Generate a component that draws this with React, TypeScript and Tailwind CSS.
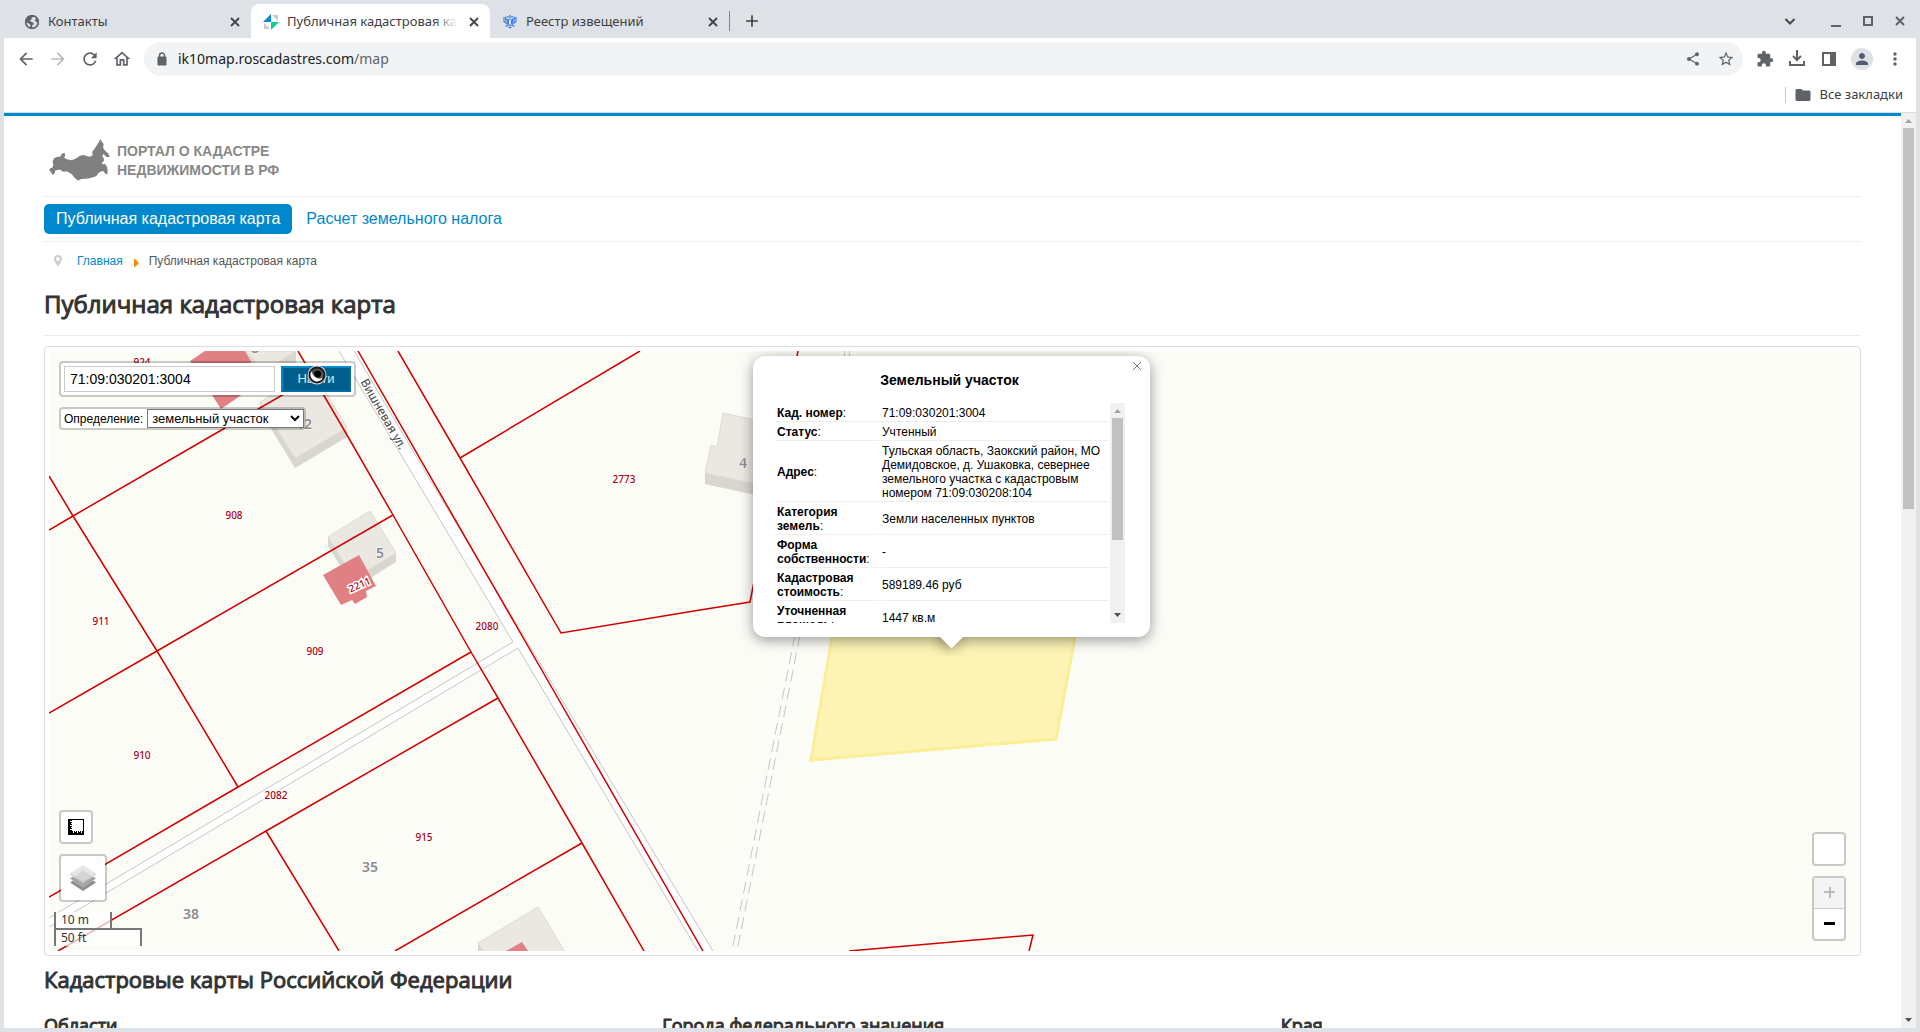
import React from 'react';
import {
    MdArrowBack, MdArrowForward, MdExtension, MdFolder, MdMoreVert,
    MdOutlineHome, MdPerson, MdRefresh, MdShare, MdStarBorder, MdAdd,
} from 'react-icons/md';

const parcelLines = [
    '358,351 540,667 703,951',
    '398,351 460,458 561,633 700,610 750,602 754,582 798,351',
    '460,458 640,351',
    '298,351 347,435 393,515 471,652 498,698 582,843 644,951',
    '49,530 73,516 225,428 312,378',
    '49,476 73,516 157,651 238,787',
    '49,713 157,651 393,515',
    '49,897 238,787 471,652',
    '58,951 266,831 498,698',
    '266,831 339,951',
    '395,951 582,843',
    '849,951 1033,935 1029,951',
];

const parcelLabels = [
    { x: 142, y: 366, text: '924' },
    { x: 234, y: 519, text: '908' },
    { x: 101, y: 625, text: '911' },
    { x: 315, y: 655, text: '909' },
    { x: 142, y: 759, text: '910' },
    { x: 487, y: 630, text: '2080' },
    { x: 276, y: 799, text: '2082' },
    { x: 424, y: 841, text: '915' },
    { x: 624, y: 483, text: '2773' },
];

const houseLabels = [
    { x: 255, y: 353, text: '8' },
    { x: 304, y: 429, text: '12' },
    { x: 380, y: 558, text: '5' },
    { x: 743, y: 468, text: '4' },
    { x: 370, y: 872, text: '35' },
    { x: 191, y: 919, text: '38' },
];

const details = [
    { name: 'Кад. номер', value: '71:09:030201:3004' },
    { name: 'Статус', value: 'Учтенный' },
    { name: 'Адрес', value: 'Тульская область, Заокский район, МО Демидовское, д. Ушаковка, севернее земельного участка с кадастровым номером 71:09:030208:104' },
    { name: 'Категория земель', value: 'Земли населенных пунктов' },
    { name: 'Форма собственности', value: '-' },
    { name: 'Кадастровая стоимость', value: '589189.46 руб' },
    { name: 'Уточненная площадь', value: '1447 кв.м' },
];

const CrossIcon = () => (
    <svg className="h-4 w-4" viewBox="0 0 16 16" stroke="currentColor" strokeWidth="2">
        <path d="M4 4l8 8M12 4l-8 8" />
    </svg>
);

const GlobeIcon = () => (
    <svg className="h-4 w-4 shrink-0" viewBox="0 0 16 16">
        <circle cx="8" cy="8" r="7" fill="#5f6368" />
        <path d="M10 2.200 7.500 4v1.500L5.500 7 9 8.500l1 1.500-2 1.500.500 2.800A6.300 6.300 0 0 0 14 8.500L12 8l-1-2.500 1.500-1.500A6 6 0 0 0 10 2.200z" fill="#dee1e6" />
        <path d="M1.800 8 5 9.500 6.500 11 6 13.500A6 6 0 0 1 1.800 8z" fill="#dee1e6" />
        <circle cx="8" cy="8" r="6.300" fill="none" stroke="#5f6368" strokeWidth="1.500" />
    </svg>
);

const RegionIcon = () => (
    <svg className="w-4 h-4 shrink-0" viewBox="0 0 16 16">
        <path d="M9 1h6v6z" fill="#c9c9c9" />
        <path d="M1 9v6h6z" fill="#c9c9c9" />
        <path d="M8 0v8H0z" fill="#0b8bcf" />
        <path d="M8 8h8l-8 8z" fill="#0bd18b" />
    </svg>
);

const EagleIcon = () => (
    <svg className="w-4 h-4 shrink-0" viewBox="0 0 16 16" fill="none" stroke="#3f7bea">
        <path d="M8 1v3M6.500 3.500 5.500 2M9.500 3.500 10.500 2" strokeWidth="1.300" />
        <path d="M2 3v3.500M3.800 2.500v5M5.500 4.500V9M14 3v3.500M12.200 2.500v5M10.500 4.500V9" strokeWidth="1.300" />
        <path d="M1.500 7 6 10.500M14.500 7 10 10.500M3.500 12.500 6.500 11M12.500 12.500 9.500 11" strokeWidth="1.300" />
        <path d="M6.500 6 8 5l1.500 1v4L8 11.500 6.500 10zM8 11v3.500M6.500 13.500h3" strokeWidth="1" />
    </svg>
);

const Tab: React.FC<{ title: string; icon: React.ReactNode; active?: boolean }> = ({ title, icon, active }) => (
    <div className={active
        ? 'flex h-[34px] w-[239px] items-center gap-2 rounded-t-lg bg-white pt-0.5 pl-3 pr-2'
        : 'flex h-[34px] w-[239px] items-center gap-2 pt-0.5 pl-3 pr-2'}
    >
        {icon}
        <span className="relative flex-1 overflow-hidden whitespace-nowrap">
            {title}
            {active && <span className="absolute inset-y-0 right-0 w-6 bg-linear-to-r from-transparent to-white" />}
        </span>
        <button aria-label="Закрыть вкладку" className="text-[#45494d]"><CrossIcon /></button>
    </div>
);

const Arrow: React.FC<{ down?: boolean }> = ({ down }) => (
    <svg className="h-[15px] w-[15px] shrink-0" viewBox="0 0 15 15">
        {down
            ? <path d="M4 5h7l-3.500 4z" fill="#505050" />
            : <path d="M4 10h7L7.500 6z" fill="#a3a3a3" />}
    </svg>
);

const BrowserChrome = () => (
    <header className="font-['Noto_Sans',sans-serif] text-[#3c4043]">
        <div className="flex h-[38px] items-end bg-[#dee1e6] pl-2 text-[13px]">
            <Tab title="Контакты" icon={<GlobeIcon />} />
            <Tab title="Публичная кадастровая карта" icon={<RegionIcon />} active />
            <Tab title="Реестр извещений" icon={<EagleIcon />} />
            <div className="flex h-[34px] flex-1 items-center">
                <div className="h-5 w-px bg-[#80868b]" />
                <button aria-label="Новая вкладка" className="ml-3"><MdAdd className="h-5 w-5" /></button>
                <div className="ml-auto flex items-center gap-4 pr-2 text-[#5f6368]">
                    <button aria-label="Поиск вкладок" className="mr-3.5">
                        <svg className="h-4 w-4" viewBox="0 0 16 16" fill="none" stroke="#45494d" strokeWidth="2"><path d="M3.500 6 8 10.500 12.500 6" /></svg>
                    </button>
                    <button aria-label="Свернуть" className="flex h-4 w-4 items-end justify-center pb-0.5"><span className="h-0.5 w-2.5 bg-[#5f6368]" /></button>
                    <button aria-label="Развернуть" className="flex h-4 w-4 items-center justify-center"><span className="h-2.5 w-2.5 border-2 border-[#5f6368]" /></button>
                    <button aria-label="Закрыть"><CrossIcon /></button>
                </div>
            </div>
        </div>

        <div className="flex h-[42px] items-center gap-3 bg-white pl-3 pr-[11px] text-[#5f6368]">
            <button aria-label="Назад"><MdArrowBack className="h-5 w-5" /></button>
            <button aria-label="Вперед"><MdArrowForward className="h-5 w-5 text-[#b8babd]" /></button>
            <button aria-label="Обновить"><MdRefresh className="h-5 w-5" /></button>
            <button aria-label="Главная страница"><MdOutlineHome className="h-5 w-5" /></button>
            <div className="flex h-[34px] flex-1 items-center rounded-full bg-[#f1f3f4] pl-2.5 pr-2">
                <svg className="mr-2 h-4 w-4" viewBox="0 0 16 16">
                    <path d="M4 6h8v8H4z" fill="#5f6368" stroke="#5f6368" strokeLinejoin="round" />
                    <path d="M5.500 6V4.500a2.500 2.500 0 0 1 5 0V6" fill="none" stroke="#5f6368" strokeWidth="1.500" />
                </svg>
                <span className="flex-1 text-sm"><span className="text-[#202124]">ik10map.roscadastres.com</span>/map</span>
                <button aria-label="Поделиться" className="mr-4"><MdShare className="h-4 w-4" /></button>
                <button aria-label="Добавить в закладки"><MdStarBorder className="h-[18px] w-[18px]" /></button>
            </div>
            <button aria-label="Расширения"><MdExtension className="h-[18px] w-5" /></button>
            <button aria-label="Загрузки">
                <svg className="h-5 w-5" viewBox="0 0 20 20" fill="none" stroke="#5f6368" strokeWidth="2">
                    <path d="M10 1v10M6 7l4 4 4-4M3 12v4h14v-4" />
                </svg>
            </button>
            <button aria-label="Боковая панель">
                <svg className="h-5 w-5" viewBox="0 0 20 20" fill="#5f6368">
                    <path d="M3 3h14v14H3zM5 5v10h6V5z" fillRule="evenodd" />
                </svg>
            </button>
            <button aria-label="Профиль" className="flex h-[22px] w-[22px] items-center justify-center rounded-full bg-[#dee1e6]">
                <MdPerson className="h-[18px] w-[18px] text-[#525d73]" />
            </button>
            <button aria-label="Меню"><MdMoreVert className="h-5 w-5" /></button>
        </div>

        <div className="flex h-8 items-center justify-end bg-white pb-0.5 pr-[13px] text-[13px]">
            <div className="mr-2 h-4 w-px bg-[#c8cbd0]" />
            <MdFolder className="mr-2 h-[18px] w-[18px] text-[#5f6368]" />
            <button>Все закладки</button>
        </div>
        <div className="h-px bg-[#dadce0]" />
    </header>
);

const CadastreLayer = () => (
    <svg className="absolute inset-0 h-full w-full" aria-hidden="true">
        <g transform="translate(-49 -351)" fontFamily="'Noto Sans', sans-serif" textAnchor="middle">
            {/* roads */}
            <polygon points="339,351 513,642 49,918 49,927 518,648 698,951 713,951 550,680 426,473 354,351" fill="#fff" />
            <g fill="none" stroke="#c6c6c6">
                <polyline points="339,351 513,642 49,918" />
                <polyline points="49,927 518,648 698,951" />
                <polyline points="354,351 426,473 550,680 713,951" />
                <polyline points="845,351 794,640 732,951" strokeDasharray="12 6" />
                <polyline points="850,351 799,640 737,951" strokeDasharray="12 6" />
            </g>

            {/* houses */}
            <g fill="#d9d6d0">
                <polygon points="245,351 296,351 296,362 262,381" />
                <polygon points="260,402 295,458 347,428 347,437 295,468 273,432 260,410" />
                <polygon points="328,537 354,579 396,553 396,562 354,588 328,546" />
                <polygon points="705,473 760,485 760,496 705,484" />
                <polygon points="478,943 484,951 478,951" />
            </g>
            <g fill="#ebe8e2" stroke="#dedad4">
                <polygon points="245,351 296,351 264,371" />
                <polygon points="260,402 313,370 347,428 295,458" />
                <polygon points="328,537 370,511 396,553 354,579" />
                <polygon points="723,413 760,421 760,485 705,473 711,445 717,447" />
                <polygon points="538,907 478,943 484,952 565,952" />
            </g>

            <g fill="none" stroke="#d10000" strokeWidth="1.500">
                {parcelLines.map(points => <polyline key={points} points={points} />)}
            </g>
            <g fill="#e08083">
                <polygon points="190,361 205,351 245,351 262,381 221,409" />
                <polygon points="359,555 376,586 366,591 367,597 355,604 352,600 341,605 323,575" />
                <polygon points="506,951 522,942 528,951" />
            </g>

            <polygon points="835,620 811,760 1056,739 1075,637 1079,620" fill="#fcf3b5" stroke="#fbee96" strokeWidth="3" />

            <g fontSize="14" fontWeight="600" fill="#8c8c8c" stroke="#fff" strokeWidth="1" paintOrder="stroke">
                {houseLabels.map(l => <text key={l.text} x={l.x} y={l.y}>{l.text}</text>)}
            </g>
            <g fontSize="10" fontWeight="500" fill="#a80010" stroke="#fff" strokeWidth="3" paintOrder="stroke">
                {parcelLabels.map(l => <text key={l.text} x={l.x} y={l.y}>{l.text}</text>)}
                <text transform="translate(361 588) rotate(-24)">2211</text>
            </g>
            <text transform="translate(380 416) rotate(60)" fontSize="12" fill="#444">Вишневая ул.</text>
        </g>
    </svg>
);

const ParcelPopup = () => (
    <div className="absolute left-[704px] top-[5px] w-[397px] rounded-xl bg-white pt-4 pr-[25px] pb-3.5 pl-[21px] text-xs leading-[14px] text-black shadow-[0_3px_14px_rgba(0,0,0,0.4)]">
        <button aria-label="Закрыть" className="absolute top-1.5 right-[9px]">
            <svg className="h-2 w-2" viewBox="0 0 8 8" stroke="#777"><path d="M0 0l8 8M8 0 0 8" /></svg>
        </button>
        <h4 className="mb-[15px] text-center text-sm leading-4 font-bold">Земельный участок</h4>
        <div className="flex h-[220px] overflow-hidden">
            <table className="w-full border-separate border-spacing-[2px] self-start">
                <tbody>
                    {details.map(row => (
                        <tr key={row.name}>
                            <th className="w-[103px] border-b border-[#eee] p-px text-left font-normal"><b>{row.name}</b>:</th>
                            <td className="border-b border-[#eee] p-px">{row.value}</td>
                        </tr>
                    ))}
                </tbody>
            </table>
            <div className="flex w-[15px] shrink-0 flex-col items-center bg-[#f1f1f1]">
                <Arrow />
                <div className="h-[122px] w-[11px] bg-[#c1c1c1]" />
                <div className="flex-1" />
                <Arrow down />
            </div>
        </div>
        {/* pointer */}
        <div className="absolute top-full left-[178px] h-[19px] w-[41px] overflow-hidden">
            <div className="mx-auto -mt-[9px] h-[17px] w-[17px] rotate-45 bg-white shadow-[0_3px_14px_rgba(0,0,0,0.4)]" />
        </div>
    </div>
);

const MapControls = () => (
    <>
        <div className="absolute top-2.5 left-2.5 flex flex-col items-start gap-2.5 text-black">
            <form className="flex items-center gap-1.5 rounded border-2 border-black/20 bg-white bg-clip-padding p-[3px]" onSubmit={e => e.preventDefault()}>
                <input
                    aria-label="Кадастровый номер"
                    defaultValue="71:09:030201:3004"
                    className="h-[26px] w-[211px] border border-[#ccc] px-[5px] text-sm"
                />
                <button className="relative h-[26px] w-[70px] border-2 border-t-[#08c] border-r-[#006da3] border-b-[#006da3] border-l-[#08c] bg-[#005e8d] text-[13px] text-[#d9e8f0]">
                    Найти
                    <svg className="absolute top-[-3px] left-6 h-5 w-5" viewBox="0 0 20 20">
                        <circle cx="10" cy="10" r="9.500" fill="#d8d8d8" />
                        <circle cx="10" cy="10" r="8.500" fill="#1c1c1c" />
                        <circle cx="10" cy="10" r="6.500" fill="#555" />
                        <path d="M4.500 6a7 7 0 0 0 3 10 7 7 0 0 0 8.500-3.500c-3 2-6 1.500-7.500-1A7 7 0 0 1 4.500 6z" fill="#fff" />
                        <circle cx="10.500" cy="9" r="3.500" fill="#000" />
                    </svg>
                </button>
            </form>
            <div className="flex items-center rounded border-2 border-black/20 bg-white bg-clip-padding pl-[3px]">
                <label htmlFor="kind" className="mr-1 text-xs leading-4">Определение:</label>
                <select id="kind" className="h-[19px] w-[157px] border border-[#767676] bg-white text-[13px] leading-4">
                    <option>земельный участок</option>
                    <option>объект недвижимости</option>
                </select>
            </div>
        </div>

        <div className="absolute bottom-[5px] left-[5px] flex flex-col items-start">
            <button aria-label="Измерить" className="mb-2.5 ml-[5px] flex h-[34px] w-[34px] items-center justify-center rounded border-2 border-black/20 bg-white bg-clip-padding">
                <svg className="h-4 w-4" viewBox="0 0 16 16">
                    <path d="M0 0h16v16H0z" />
                    <path d="M4 1h11v11H4z" fill="#fff" />
                    <path d="M2 2.500h2M3 4.500h1M2 6.500h2M3 8.500h1M2 10.500h2M5.500 12v2M7.500 12v1M9.500 12v2M11.500 12v1M13.500 12v2" stroke="#fff" />
                </svg>
            </button>
            <button aria-label="Слои" className="mb-2.5 ml-[5px] flex h-12 w-12 items-center justify-center rounded border-2 border-black/20 bg-white bg-clip-padding">
                <svg className="h-[26px] w-[26px]" viewBox="0 0 26 26">
                    <path d="M0 17.500 13 26l13-8.500-3-2-10 6.500-10-6.500z" fill="#8f8f8f" />
                    <path d="M0 13.500 13 22l13-8.500-3-2-10 6.500-10-6.500z" fill="#a4a4a4" />
                    <path d="M0 9l13 9 13-9-2-1.500-11 7.500L2 7.500z" fill="#b5b5b5" />
                    <path d="M13 0 0 8.500l13 8 13-8z" fill="#e6e6e6" />
                    <path d="M13 5 5 11.500l8 5 8-5z" fill="#d4d4d4" />
                </svg>
            </button>
            <div className="h-[18px] w-[58px] border-2 border-t-0 border-[#777] bg-white/70 px-[5px] font-['Noto_Sans',sans-serif] text-xs leading-4 text-[#333]">10 m</div>
            <div className="-mt-0.5 h-[18px] w-[88px] border-2 border-b-0 border-[#777] bg-white/70 px-[5px] font-['Noto_Sans',sans-serif] text-xs leading-4 text-[#333]">50 ft</div>
        </div>

        <div className="absolute right-2.5 bottom-2.5 flex flex-col gap-2.5">
            <button aria-label="Во весь экран" className="h-[34px] w-[34px] rounded border-2 border-black/20 bg-white bg-clip-padding" />
            <div className="w-[34px] rounded border-2 border-black/20 bg-white bg-clip-padding">
                <button aria-label="Приблизить" className="flex h-[31px] w-full items-center justify-center border-b border-[#ccc] bg-[#f4f4f4]">
                    <svg className="h-3 w-3" viewBox="0 0 12 12" stroke="#bbb" strokeWidth="2"><path d="M1 5h11M7 0v11" /></svg>
                </button>
                <button aria-label="Отдалить" className="flex h-[30px] w-full items-center justify-center">
                    <svg className="h-3 w-3" viewBox="0 0 12 12" stroke="#000" strokeWidth="3"><path d="M1 5.500h11" /></svg>
                </button>
            </div>
        </div>
    </>
);

const headingStyle = "font-['Open_Sans',sans-serif] font-normal text-[#333] [-webkit-text-stroke:1px_#333]";

const MapPage = () => (
    <main className="min-w-0 flex-1 overflow-hidden border-t-3 border-[#08c] bg-white px-10 font-['Liberation_Sans',Arial,sans-serif]">
        <div className="flex items-start gap-[7px] border-b border-[#eee] pt-[23px] pb-[15px] pl-[5px]">
            <svg className="h-[42px] w-[61px]" viewBox="27 27 184 126" fill="#808080">
                <path d="M30 115 37 113 40 105 38 95 42 85 52 80 60 80 66 71 74 68 76 78 72 82 80 88 95 91 103 88 112 83 120 77 132 75 140 78 150 80 155 78 159 74 157 66 163 58 168 50 174 41 178 34 182 27 187 36 192 42 190 52 196 62 205 70 211 81 201 81 195 76 191 72 188 78 192 84 193 92 186 98 188 103 196 102 202 110 204 122 203 134 196 131 191 123 184 125 176 129 170 138 158 143 145 146 125 147 114 152 105 144 95 132 82 125 68 125 60 119 50 121 46 122 44 130 37 135 33 126 28 122z" />
            </svg>
            <p className="pt-[3px] text-sm leading-[19px] font-bold text-[#888]">ПОРТАЛ О КАДАСТРЕ<br />НЕДВИЖИМОСТИ В РФ</p>
        </div>
        <nav className="flex gap-0.5 border-b border-[#eee] py-[7px] text-base leading-[30px] text-[#08c]">
            <a href="#map" className="rounded-[5px] bg-[#08c] px-3 text-white">Публичная кадастровая карта</a>
            <a href="#tax" className="px-3">Расчет земельного налога</a>
        </nav>
        <div className="flex h-[38px] items-center pl-2.5 text-xs text-[#555]">
            <svg className="mr-[15px] h-3 w-2" viewBox="0 0 8 12">
                <path d="M4 0a4 4 0 0 0-4 4c0 3 3 5 4 8 1-3 4-5 4-8a4 4 0 0 0-4-4zm0 2a2 2 0 1 1 0 4 2 2 0 0 1 0-4z" fill="#ccc" />
            </svg>
            <a href="#home" className="text-[#08c]">Главная</a>
            <svg className="mr-2.5 ml-[11px] mt-1 h-2 w-[5px]" viewBox="0 0 5 8"><path d="M0 0h1l4 4-4 4H0z" fill="#f80" /></svg>
            <span>Публичная кадастровая карта</span>
        </div>
        <h1 className={`${headingStyle} mt-1 border-b border-[#eee] pb-[11px] text-2xl leading-[40px]`}>Публичная кадастровая карта</h1>

        <div className="mt-2.5 rounded border border-[#ddd] p-1">
            <div className="relative h-[600px] overflow-hidden bg-[#fbfcf6]">
                <CadastreLayer />
                <ParcelPopup />
                <MapControls />
            </div>
        </div>

        <h2 className={`${headingStyle} mt-[3px] text-[22px] leading-[40px]`}>Кадастровые карты Российской Федерации</h2>
        <div className="mt-3.5 grid grid-cols-3 gap-[38px] text-lg leading-6">
            <h3 className={headingStyle}>Области</h3>
            <h3 className={headingStyle}>Города федерального значения</h3>
            <h3 className={headingStyle}>Края</h3>
        </div>
    </main>
);

export default function App() {
    return (
        <div className="flex h-screen flex-col overflow-hidden bg-[#dee1e6] px-1 pb-1">
            <BrowserChrome />
            <div className="flex min-h-0 flex-1">
                <MapPage />
                <div className="flex w-[15px] shrink-0 flex-col items-center bg-[#f1f1f1]">
                    <Arrow />
                    <div className="h-[381px] w-[11px] bg-[#c1c1c1]" />
                    <div className="flex-1" />
                    <Arrow down />
                </div>
            </div>
        </div>
    );
}
